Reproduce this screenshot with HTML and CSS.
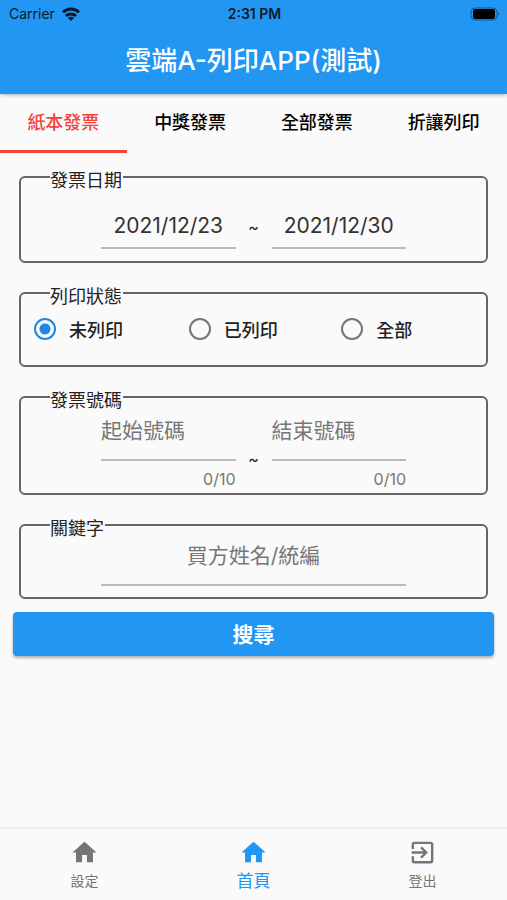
FILE: index.html
```html
<!DOCTYPE html>
<html lang="zh-Hant">

<head>
    <meta charset="UTF-8">
    <meta name="viewport" content="width=device-width, initial-scale=1.0">
    <title>雲端A-列印APP(測試)</title>
    <link rel="stylesheet" href="styles.css">
</head>

<body>

    <header class="app-header">
        <div class="status-bar">
            <div class="carrier">
                <span>Carrier</span>
                <svg class="wifi" viewBox="0 0 18 14" fill="none" stroke="currentColor" stroke-width="3">
                    <path d="M1 5.3a11.4 11.4 0 0 1 16 0" />
                    <path d="M4 9a7.1 7.1 0 0 1 10 0" />
                    <path d="M9 14L6 11a4.2 4.2 0 0 1 6 0z" fill="currentColor" stroke="none" />
                </svg>
            </div>
            <span class="clock">2:31 PM</span>
            <svg class="battery" viewBox="0 0 30 14">
                <rect x="1" y="1" width="26" height="12" rx="4" fill="none" stroke="#000" stroke-opacity=".4" />
                <rect x="3" y="2" width="22" height="10" rx="2" />
                <path d="M28 5q2 2 0 4z" opacity=".4" />
            </svg>
        </div>
        <h1>雲端A-列印APP(測試)</h1>
    </header>

    <nav class="tabs">
        <button type="button" class="tab active">紙本發票</button>
        <button type="button" class="tab">中獎發票</button>
        <button type="button" class="tab">全部發票</button>
        <button type="button" class="tab">折讓列印</button>
    </nav>

    <main>
        <form id="searchForm">
            <fieldset>
                <legend>發票日期</legend>
                <div class="range dates">
                    <input type="text" class="line-input" aria-label="開始日期" value="2021/12/23">
                    <span class="tilde">~</span>
                    <input type="text" class="line-input" aria-label="結束日期" value="2021/12/30">
                </div>
            </fieldset>

            <fieldset>
                <legend>列印狀態</legend>
                <div class="radios">
                    <label><input type="radio" name="status" checked>未列印</label>
                    <label><input type="radio" name="status">已列印</label>
                    <label><input type="radio" name="status">全部</label>
                </div>
            </fieldset>

            <fieldset>
                <legend>發票號碼</legend>
                <div class="range numbers">
                    <div class="field">
                        <input type="text" class="line-input" maxlength="10" aria-label="起始號碼" placeholder="起始號碼">
                        <span class="counter">0/10</span>
                    </div>
                    <span class="tilde">~</span>
                    <div class="field">
                        <input type="text" class="line-input" maxlength="10" aria-label="結束號碼" placeholder="結束號碼">
                        <span class="counter">0/10</span>
                    </div>
                </div>
            </fieldset>

            <fieldset>
                <legend>關鍵字</legend>
                <div class="keyword">
                    <input type="text" class="line-input" aria-label="關鍵字" placeholder="買方姓名/統編">
                </div>
            </fieldset>

            <button type="submit" class="search-btn">搜尋</button>
        </form>
    </main>

    <nav class="bottom-nav">
        <a href="#settings">
            <svg viewBox="0 0 24 24"><path d="M10 20v-6h4v6h5v-8h3L12 3 2 12h3v8z" /></svg>
            <span>設定</span>
        </a>
        <a href="#home" class="active">
            <svg viewBox="0 0 24 24"><path d="M10 20v-6h4v6h5v-8h3L12 3 2 12h3v8z" /></svg>
            <span>首頁</span>
        </a>
        <a href="#logout">
            <svg viewBox="0 0 24 24"><path d="M10.09 15.59L11.5 17l5-5-5-5-1.41 1.41L12.67 11H3v2h9.67l-2.58 2.59zM19 3H5c-1.11 0-2 .9-2 2v4h2V5h14v14H5v-4H3v4c0 1.1.89 2 2 2h14c1.1 0 2-.9 2-2V5c0-1.1-.9-2-2-2z" /></svg>
            <span>登出</span>
        </a>
    </nav>

    <script>
        document.getElementById('searchForm').addEventListener('submit', function (e) {
            e.preventDefault();
        });

        // Character counters
        document.querySelectorAll('.field').forEach(function (field) {
            const input = field.querySelector('input');
            const counter = field.querySelector('.counter');
            input.addEventListener('input', function () {
                counter.textContent = `${input.value.length}/10`;
            });
        });
    </script>

</body>

</html>
```
FILE: styles.css
```css
/* Base */
* {
    box-sizing: border-box;
}

body {
    margin: 0;
    min-height: 100vh;
    display: flex;
    flex-direction: column;
    background: #fafafa;
    color: #222;
    font-family: Inter, "Noto Sans CJK TC", sans-serif;
    font-size: 18px;
}

button,
input {
    font-family: inherit;
}

button {
    border: none;
    cursor: pointer;
}

/* Header */
.app-header {
    background: #2196f3;
    box-shadow: 0 1px 4px rgba(0, 0, 0, 0.3);
}

.status-bar {
    display: grid;
    grid-template-columns: 1fr auto 1fr;
    align-items: center;
    height: 27px;
    padding: 0 7px 0 9px;
    color: #0a1a2a;
    font-size: 14px;
}

.carrier {
    display: flex;
    align-items: center;
    gap: 7px;
}

.wifi {
    width: 18px;
    height: 14px;
}

.clock {
    font-weight: 600;
}

.battery {
    width: 30px;
    height: 14px;
    justify-self: end;
}

h1 {
    margin: 0;
    color: #fff;
    font-size: 26px;
    font-weight: 500;
    line-height: 67px;
    text-align: center;
}

/* Tabs */
.tabs {
    display: grid;
    grid-template-columns: repeat(4, 1fr);
}

.tab {
    height: 59px;
    padding: 0 0 2px;
    background: none;
    border-bottom: 3px solid transparent;
    color: #000;
    font-size: 18px;
    font-weight: 500;
}

.tab.active {
    color: #f44336;
    border-color: #f44336;
}

/* Search form */
main {
    flex: 1;
    padding: 12px 13px;
}

fieldset {
    min-width: 0;
    margin: 0 6px 18px;
    padding: 0;
    border: 2px solid #666;
    border-radius: 6px;
}

legend {
    margin-left: 29px;
    padding: 8px 1px 0 0;
    line-height: 16px;
}

.range {
    display: grid;
    grid-template-columns: 1fr 36px 1fr;
    align-items: center;
}

.dates {
    padding: 16px 80px 12px;
}

.numbers {
    padding: 8px 80px 5px;
}

.keyword {
    padding: 5px 80px 11px;
}

.tilde {
    font-size: 16px;
    text-align: center;
}

.numbers .tilde {
    padding-top: 12px;
}

.line-input {
    display: block;
    width: 100%;
    height: 44px;
    padding: 0 0 2px;
    background: none;
    border: none;
    border-bottom: 2px solid #bbb;
    border-radius: 0;
    outline: none;
    color: #333;
    font-size: 21px;
}

.line-input::placeholder {
    color: #777;
}

.line-input:focus {
    border-color: #2196f3;
}

.dates .line-input,
.keyword .line-input {
    text-align: center;
}

.numbers .line-input,
.keyword .line-input {
    padding-bottom: 16px;
}

.counter {
    display: block;
    margin-top: 9px;
    color: #777;
    font-size: 16px;
    line-height: 18px;
    text-align: right;
}

/* Radios */
.radios {
    display: grid;
    grid-template-columns: 155fr 153fr 145fr;
    padding: 12px 0 24px 13px;
}

.radios label {
    display: flex;
    align-items: center;
    gap: 13px;
    height: 24px;
    font-weight: 500;
}

.radios input {
    appearance: none;
    width: 22px;
    height: 22px;
    margin: 0;
    border: 2px solid #757575;
    border-radius: 50%;
}

.radios input:checked {
    border-color: #1e88e5;
    background: radial-gradient(circle, #1e88e5 5px, transparent 6px);
}

.search-btn {
    display: block;
    width: 100%;
    height: 44px;
    margin-top: -5px;
    padding: 0 0 2px;
    background: #2196f3;
    border-radius: 4px;
    box-shadow: 0 2px 3px rgba(0, 0, 0, 0.3);
    color: #fff;
    font-size: 21px;
    font-weight: 700;
}

/* Bottom navigation */
.bottom-nav {
    display: grid;
    grid-template-columns: repeat(3, 1fr);
    height: 73px;
    border-top: 2px solid #f0f0f0;
}

.bottom-nav a {
    display: flex;
    flex-direction: column;
    align-items: center;
    padding-top: 9px;
    color: #757575;
    font-size: 14px;
    line-height: 28px;
    text-decoration: none;
}

.bottom-nav svg {
    width: 29px;
    height: 29px;
    fill: currentColor;
}

.bottom-nav .active {
    color: #2196f3;
    font-size: 17px;
}
```
